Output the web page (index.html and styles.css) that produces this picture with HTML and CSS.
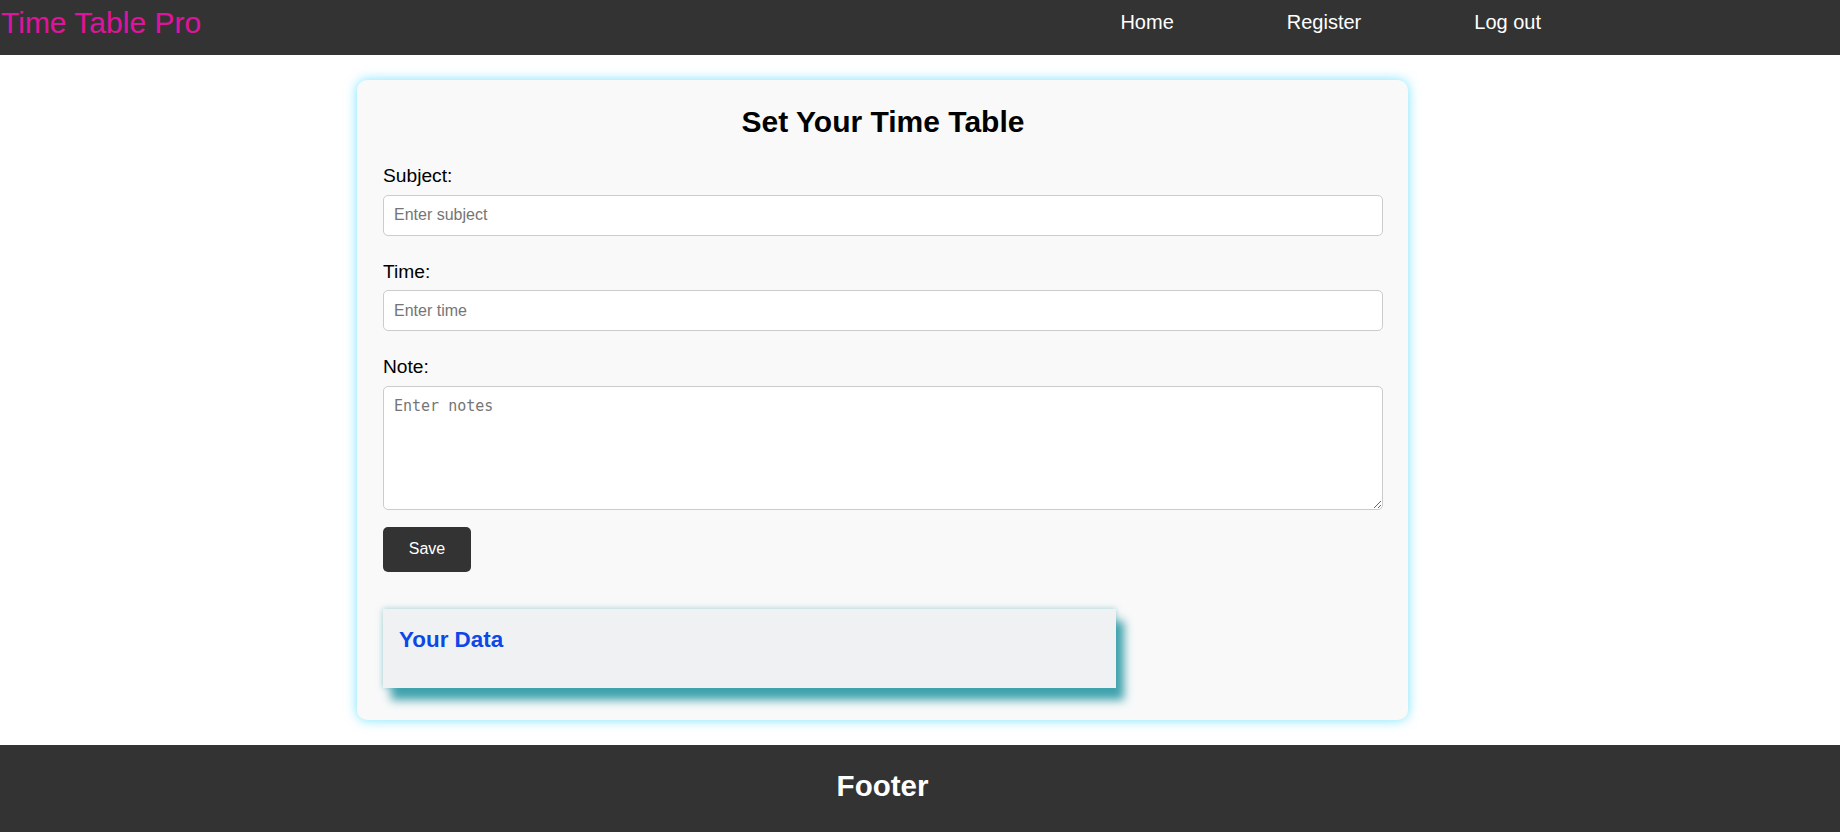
FILE: index.html
```html
<!DOCTYPE html>
<html lang="en">
<head>
<meta charset="utf-8">
<title>Time Table Pro</title>
<link rel="stylesheet" href="styles.css">
</head>
<body>
<header class="topbar">
  <div class="logo">Time Table Pro</div>
  <nav class="nav">
    <a href="#" class="nav-link">Home</a>
    <a href="#" class="nav-link">Register</a>
    <a href="#" class="nav-link">Log out</a>
  </nav>
</header>
<main class="main">
  <section class="card">
    <h1 class="card-title">Set Your Time Table</h1>
    <form class="form">
      <label class="label" for="subject">Subject:</label>
      <input class="field" id="subject" type="text" placeholder="Enter subject">
      <label class="label" for="time">Time:</label>
      <input class="field" id="time" type="text" placeholder="Enter time">
      <label class="label" for="note">Note:</label>
      <textarea class="field notes" id="note" placeholder="Enter notes"></textarea>
      <button class="save" type="button">Save</button>
    </form>
    <div class="data-box">
      <h3 class="data-title">Your Data</h3>
    </div>
  </section>
</main>
<footer class="footer">
  <h2 class="footer-title">Footer</h2>
</footer>
</body>
</html>
```
FILE: styles.css
```css
* { box-sizing: border-box; }
html, body { margin: 0; padding: 0; }
body {
  font-family: "Liberation Sans", Arial, sans-serif;
  background: #ffffff;
  color: #000;
}
.topbar {
  background: #333333;
  height: 55px;
  display: flex;
  align-items: flex-start;
}
.logo {
  color: #e0139e;
  font-size: 30px;
  line-height: 34px;
  padding: 6px 0 0 1px;
}
.nav {
  margin-left: auto;
  margin-right: 299px;
  padding-top: 11px;
  display: flex;
  gap: 113px;
}
.nav-link {
  color: #ffffff;
  text-decoration: none;
  font-size: 20px;
  line-height: 23px;
}
.main {
  padding: 25px 75px 25px 0;
}
.card {
  width: 1051px;
  margin: 0 auto;
  background: #f9f9f9;
  border-radius: 10px;
  box-shadow: 0 0 12px rgba(0, 205, 255, 0.55);
  padding: 25px 25px 32px 26px;
}
.card-title {
  margin: 0 0 26px;
  text-align: center;
  font-size: 30px;
  font-weight: bold;
}
.form {
  display: flex;
  flex-direction: column;
  align-items: flex-start;
}
.label {
  font-size: 19.2px;
  margin-bottom: 7.5px;
}
.field {
  width: 100%;
  height: 41px;
  padding: 10px;
  font-family: "Liberation Sans", Arial, sans-serif;
  font-size: 16px;
  border: 1px solid #cccccc;
  border-radius: 5px;
  background: #ffffff;
  margin: 0 0 25px;
}
.notes {
  height: 124px;
  font-family: "DejaVu Sans Mono", monospace;
  font-size: 15px;
  margin-bottom: 17px;
}
.save {
  width: 88px;
  height: 45px;
  background: #333333;
  color: #ffffff;
  border: none;
  border-radius: 5px;
  font-family: "Liberation Sans", Arial, sans-serif;
  font-size: 16px;
}
.data-box {
  width: 733px;
  height: 79px;
  margin-top: 37px;
  background: #f0f1f3;
  padding: 18px 16px 0;
  box-shadow: 8px 12px 9px #3fa2ad, 0 0 6px rgba(63, 162, 173, 0.5);
}
.data-title {
  margin: 0;
  color: #0d47e6;
  font-size: 22.4px;
  font-weight: bold;
}
.footer {
  background: #333333;
  padding: 24px 75px 30px 0;
  text-align: center;
}
.footer-title {
  margin: 0;
  color: #ffffff;
  font-size: 29.5px;
  font-weight: bold;
}
```
